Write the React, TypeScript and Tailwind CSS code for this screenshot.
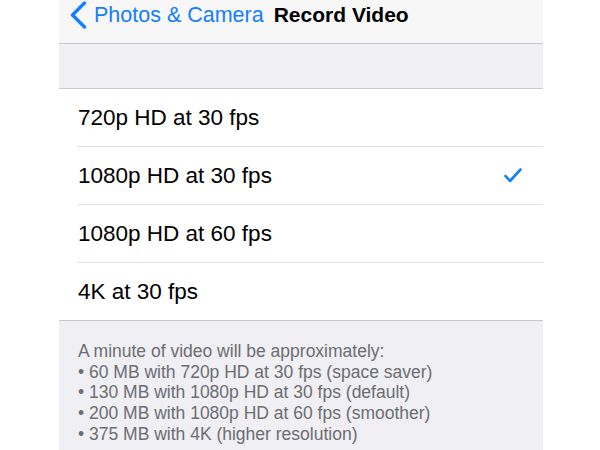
import React from 'react';

const options = [
  { label: '720p HD at 30 fps', selected: false },
  { label: '1080p HD at 30 fps', selected: true },
  { label: '1080p HD at 60 fps', selected: false },
  { label: '4K at 30 fps', selected: false },
];

const notes = [
  'A minute of video will be approximately:',
  '• 60 MB with 720p HD at 30 fps (space saver)',
  '• 130 MB with 1080p HD at 30 fps (default)',
  '• 200 MB with 1080p HD at 60 fps (smoother)',
  '• 375 MB with 4K (higher resolution)',
];

function Check() {
  return (
    <svg width="18" height="15" viewBox="0 0 18 15" fill="none">
      <path d="M1.5 8 L6 13 L16.5 1.5" stroke="#157efb" strokeWidth="2.6" strokeLinecap="round" strokeLinejoin="round" />
    </svg>
  );
}

export default function App() {
  return (
    <div className="flex h-[450px] w-[600px] bg-white font-['Liberation_Sans',Arial,sans-serif]">
      <div className="ml-[59px] flex w-[484px] flex-col bg-[#efeff4]">
        {/* Nav bar */}
        <div className="flex h-[44px] shrink-0 items-start border-b border-[#c8c7cc] bg-[#f7f7f8] pl-[10px] pt-[1px]">
          <svg width="20" height="28" viewBox="0 0 20 28" fill="none" className="mr-[5px]">
            <path d="M15.5 2 L3.5 14 L15.5 26" stroke="#157efb" strokeWidth="3.4" strokeLinecap="round" strokeLinejoin="round" />
          </svg>
          <span className="text-[21.5px] leading-[28px] text-[#157efb]">Photos &amp; Camera</span>
          <span className="ml-[10px] text-[21px] font-bold leading-[28px] text-black">Record Video</span>
        </div>

        {/* Spacer section */}
        <div className="h-[45px] shrink-0 border-b border-[#c8c7cc]" />

        {/* Options */}
        <div className="shrink-0 bg-white">
          {options.map((o, i) => {
            const last = i === options.length - 1;
            return (
              <div key={o.label} className={last ? 'border-b border-[#c8c7cc] pl-[19px]' : 'pl-[19px]'}>
                <div
                  className={
                    last
                      ? 'flex h-[57px] items-center pr-[21px]'
                      : 'flex h-[58px] items-center border-b border-[#e0e0e3] pr-[21px]'
                  }
                >
                  <span className="flex-1 text-[22.5px] text-black">{o.label}</span>
                  {o.selected && <Check />}
                </div>
              </div>
            );
          })}
        </div>

        {/* Footer */}
        <div className="flex flex-col pl-[19px] pt-[20px] text-[17.5px] leading-[20.7px] text-[#6d6d72]">
          {notes.map((n) => (
            <span key={n}>{n}</span>
          ))}
        </div>
      </div>
    </div>
  );
}
